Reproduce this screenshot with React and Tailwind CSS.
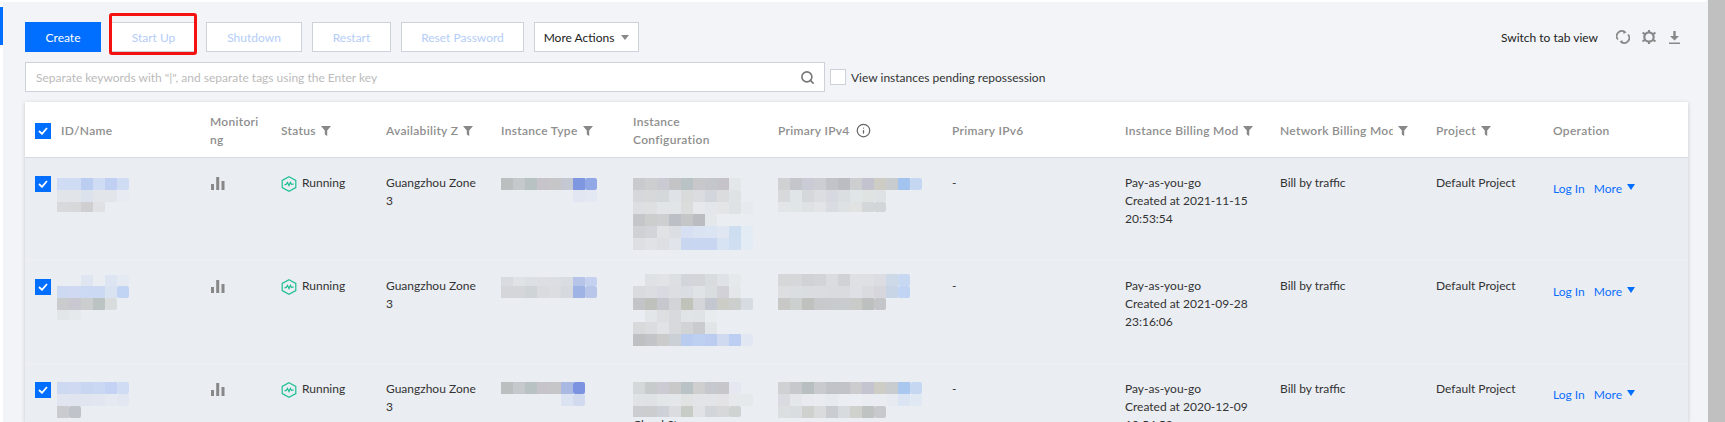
import { Search, Info } from 'lucide-react';

const columns = 'grid grid-cols-[175px_71px_105px_115px_132px_145px_174px_173px_155px_156px_117px_145px]';

const rows = [
  {
    created: '2021-11-15',
    time: '20:53:54',
    id: { y: 20, cells: [
      [0, '#cfdcf3 #d0dcf3 #bccdf2 #cfdcf4 #bfd0f3 #cfdcf4'],
      [0, '#e1e4e9 #e1e4e8 #dbe2ec #e2e5ea #e2e5ea #e8ebf1'],
      [0, '#d7d9dc #d6d8da #cfcfd2 #dfe1e5', 10],
    ] },
    type: { y: 20, cells: [
      [0, '#bcbfc0 #c6c9cc #b9c2c3 #c6c4ca #c6c5c7 #c3c8d2 #7e97e0 #92a8e6'],
      [6, '#e2e6f2 #e4e8f3'],
    ] },
    config: { y: 20, cells: [
      [0, '#c9cacd #ccced0 #cacad3 #c4c4c6 #b9c2c5 #c8c7c9 #c3c6cb #c5c3c9 #e4e7ea'],
      [0, '#d5d7da #d6d8da #d5d8db #dfe2e6 #d8dbd9 #dadcdf #d2d5db #dadcde #dfe2e4'],
      [0, '#dcdee1 #dddfe1 #e2e5e8 #e2e5e8 #dadddc #e6e9ec #e3e6ea #e3e5e7 #dfe2e4 #e7eaee'],
      [0, '#c4c6c7 #cbcecd #cdcfd0 #bcbfc6 #c5c6c8 #babcc2 #e5e8eb'],
      [0, '#cfd1d4 #d2d4d9 #e0e3e4 #dbdfe3 #d7e0f2 #dae3f2 #dbe4f3 #e0e7f3 #cedef1 #e3ebf5'],
      [0, '#dddfe2 #e0e2e5 #dddfe2 #e1e4ea #c8d6f0 #c9d6f1 #c8d6f2 #d7e2f2 #cfdef1 #e3ebf5'],
    ] },
    ip: { y: 20, cells: [
      [0, '#cfd1d2 #c4c6cc #c9ccd4 #cdced3 #c0c4c9 #bcbcc3 #ccced0 #c2c3cf #cdcdc6 #c8ccce #a3c4ef #c6d7f2'],
      [0, '#d7d9db #e0e6e8 #d4d8da #dcdde0 #d6d9df #dadee0 #e0e5e8 #dfe3e2 #dfe2e4'],
      [0, '#e3e6e9 #e0e5e7 #dfe2e2 #e2e4e8 #d9dce0 #dde1e4 #e1e3e3 #d4d7da #d3d6d8', 10],
    ] },
  },
  {
    created: '2021-09-28',
    time: '23:16:06',
    id: { y: 14, cells: [
      [2, '#e0e6f1 #eaedf2 #dde5f2 #e4e9f2', 11],
      [0, '#ccd9f1 #cfdaf2 #ccd9f2 #ccd9f2 #d9e2f1 #c2d4f4'],
      [0, '#c9cbcd #c9c7d0 #cbcdcf #bcc3c3 #d8dcdd'],
      [0, '#e3e6e9 #e6e9ec', 10],
    ] },
    type: { y: 16, cells: [
      [0, '#d8dbdf #e0e3e6 #dcdfe3 #dcdee4 #dbdee2 #d9dce0 #b5c4e8 #c5d1ee', 9],
      [0, '#d4d6da #d4d6d9 #cfd4d6 #d9dbdf #dbdde1 #d6d9de #9fb3e4 #b8c6ea'],
    ] },
    config: { y: 13, cells: [
      [1, '#dfe2e5 #e1e3e6 #dde0e3 #d2d5da #d3d5d9 #d9dcdf #dfe2e6 #e6e9ec'],
      [0, '#d9dbde #dbdde0 #d9d9e2 #dcdee2 #dadde1 #e0e3e6 #dadde0 #d2d1d8 #e4e7ea'],
      [0, '#c2c4c7 #bfc1bd #c5c8cd #d2d5d7 #bfc3ba #d3d5d8 #c3c8d0 #cdcdc8 #cbd0cf #d7dbe2'],
      [1, '#e3e6e9 #dcdee0 #d7d9dc #e1e4e7 #e0e3e6 #e9ecef'],
      [0, '#d7d9db #dadcde #e0e2e5 #d7d9dc #d1d3d4 #cacbcf #e2e5e8'],
      [0, '#bfc0c2 #c3c4c7 #cacbca #cbd0d7 #bacbf0 #bed0f2 #bcccf1 #cfdaf1 #bccef2 #e1e8f3'],
    ] },
    ip: { y: 13, cells: [
      [0, '#d6d7d9 #d5d7d9 #d0d3d6 #d2d4d7 #dadde0 #d0d2d6 #dee0e4 #dee0e4 #dcdde2 #ced9e8 #c8d8f2'],
      [0, '#dcdee0 #dbdee1 #dadde0 #dadcdf #d9dbde #d9dbdf #dde0e4 #d9dbdf #d6d6dc #c8d5e6 #c2d4f3'],
      [0, '#c8c9c7 #ccd0ce #bfc1bf #c8c9cb #c8cbcd #c8cccf #c9cbc9 #bcc0bf #c4c5c8'],
    ] },
  },
  {
    created: '2020-12-09',
    time: '10:54:53',
    note: 'Cloud Storage',
    id: { y: 18, cells: [
      [0, '#ccd9f1 #cfdaf2 #c8d6f2 #cad8f3 #c4d3f4 #d0dcf3'],
      [0, '#e0e5f0 #dfe4ef #e0e5f0 #e1e6f0 #e5e9f2 #e2e7f2'],
      [0, '#c9cbcf #c0c3c9'],
    ] },
    type: { y: 18, cells: [
      [0, '#bcbfc0 #c6c9cc #b9c2c3 #c6c4ca #c6c5c7 #a9b9e2 #7b93e0'],
      [5, '#dbe2f1 #d2daf0'],
    ] },
    config: { y: 18, cells: [
      [0, '#d5d8d9 #c7cbcc #cccbd3 #c9c9c9 #b9c3c5 #cfcfd0 #c5c8cc #c7c6cb #e5e8f1'],
      [0, '#e0e3e6 #dfe2e4 #e3e6e9 #e4e7ea #e0e3e2 #e2e4e7 #e2e4e7 #e3e3e6 #e6e9eb #e6e9eb'],
      [0, '#cbcdd0 #cbcdcf #cfd1d8 #dadcdf #c8ccc6 #e0e2e5 #d2d5d9 #d6d8da #cfd3d2', 11],
    ] },
    ip: { y: 18, cells: [
      [0, '#cfd1d2 #c6c8cc #b8c0bf #c8cacd #c0c4c8 #c1c3c8 #ccccce #c3c4cf #cdcdc6 #c8ccce #aac8ef #c6d7f2'],
      [0, '#d9dbe0 #e4e7ea #e8eaf0 #e8ebef #e6e9ed #eaedf1 #ebeef2 #e9ecf0 #e9ecf1 #e7eaf0 #dbe4f3 #e0e8f3'],
      [0, '#dcdfdf #d9dddf #cfd1cf #d9dbdd #c9ccd0 #d7dbdd #cfd1cd #bfc4c2 #c7c9cc'],
    ] },
  },
];

// pixelated redaction blocks, 12px cells
function Mosaic({ y, cells }) {
  let top = y;
  const rects = [];
  cells.forEach(([skip, colors, h = 12], r) => {
    const list = colors.split(' ');
    list.forEach((fill, c) => {
      rects.push(
        <rect
          key={`${r}-${c}`}
          x={(skip + c) * 12}
          y={top}
          width="12"
          height={h}
          rx={c === list.length - 1 ? 2 : 0}
          fill={fill}
        />
      );
    });
    top += h;
  });
  return (
    <svg width="150" height="103" className="block overflow-visible">
      {rects}
    </svg>
  );
}

function Funnel() {
  return (
    <svg width="10" height="10" viewBox="0 0 10 10" className="shrink-0">
      <path d="M0 0h10L6.2 4.6V10L3.8 8.6V4.6z" fill="#888888" />
    </svg>
  );
}

function Check() {
  return (
    <span className="flex h-4 w-4 shrink-0 items-center justify-center bg-[#006eff]">
      <svg width="10" height="8" viewBox="0 0 10 8">
        <path d="M1 4l3 2.8L9 1" fill="none" stroke="#ffffff" strokeWidth="1.8" />
      </svg>
    </span>
  );
}

function Bars() {
  return (
    <svg width="14" height="13" viewBox="0 0 14 13" className="block">
      <path d="M0 7h3v6H0zM5.2 0h3v13h-3zM10.5 4h3v9h-3z" fill="#888888" />
    </svg>
  );
}

function RunningIcon() {
  return (
    <svg width="16" height="16" viewBox="0 0 16 16" className="shrink-0">
      <path d="M8 .8l6.8 3.6v7.2L8 15.2l-6.8-3.6V4.4z" fill="none" stroke="#1fbf95" strokeWidth="1.2" />
      <path d="M3.5 8.8l1.7-.4 1.3-2 1.5 3.2 1.5-3.2 1 2 2.3-.4" fill="none" stroke="#1fbf95" strokeWidth="1.2" />
    </svg>
  );
}

function ToolButton({ children, className }) {
  return (
    <button className={`flex h-[30px] items-center justify-center border border-[#ccd1da] bg-white pt-px text-[#b4cdf8] ${className}`}>
      {children}
    </button>
  );
}

function HeadCell({ children, width, filter, className = '' }) {
  return (
    <div className={`flex items-center gap-[5px] pl-[10px] pt-[2px] font-semibold tracking-[0.3px] text-[#8e8e8e] ${className}`}>
      <span className={`overflow-hidden whitespace-nowrap ${width}`}>{children}</span>
      {filter && <Funnel />}
    </div>
  );
}

function Row({ row }) {
  return (
    <div className={`${columns} h-[103px] shrink-0 border-b border-[#eef0f4] bg-[#eaedf2] text-[#333333]`}>
      <div className="flex items-start pl-[10px]">
        <div className="mt-[18px]"><Check /></div>
        <div className="ml-[6px]"><Mosaic {...row.id} /></div>
      </div>
      <div className="pl-[11px] pt-[19px]"><Bars /></div>
      <div className="flex items-start gap-[5px] pl-[10px] pt-[18px]">
        <RunningIcon />
        <span className="-mt-[2px]">Running</span>
      </div>
      <div className="pl-[10px] pr-2 pt-4">Guangzhou Zone 3</div>
      <div className="pl-[10px]"><Mosaic {...row.type} /></div>
      <div className="relative pl-[10px]">
        <Mosaic {...row.config} />
        {row.note && <span className="absolute left-[10px] top-[52px]">{row.note}</span>}
      </div>
      <div className="pl-[10px]"><Mosaic {...row.ip} /></div>
      <div className="pl-[10px] pt-4">-</div>
      <div className="pl-[10px] pt-4">
        <div>Pay-as-you-go</div>
        <div>Created at {row.created}</div>
        <div>{row.time}</div>
      </div>
      <div className="pl-[10px] pt-4">Bill by traffic</div>
      <div className="pl-[10px] pt-4">Default Project</div>
      <div className="flex items-start pl-[10px] pt-[22px] text-[#0a6fff]">
        <span>Log In</span>
        <span className="ml-[9px]">More</span>
        <svg width="8" height="6" viewBox="0 0 8 6" className="ml-[5px] mt-[4px]">
          <path d="M0 0h8L4 6z" fill="#006eff" />
        </svg>
      </div>
    </div>
  );
}

export default function App() {
  return (
    <div className="flex h-[422px] w-[1725px] overflow-hidden bg-[#f2f4f8] font-['Lato',sans-serif] text-xs leading-[18px]">
      <div className="w-[3px] shrink-0 bg-white pt-[7px]">
        <div className="h-[38px] bg-[#006eff]" />
      </div>

      <main className="relative w-[1705px] shrink-0 pl-[22px]">
        <div className="absolute left-0 right-[2px] top-0 h-[2px] bg-white" />

        {/* Toolbar */}
        <div className="flex items-center justify-between pr-[28px] pt-[22px]">
          <div className="flex items-center gap-[10px]">
            <button className="h-[30px] w-[76px] bg-[#006eff] pt-px text-white">Create</button>
            <div className="relative">
              <ToolButton className="w-[85px]">Start Up</ToolButton>
              <div className="absolute -bottom-[3px] -left-[2px] -right-px -top-[9px] rounded-[3px] border-[3px] border-[#f5110f]" />
            </div>
            <ToolButton className="w-[96px]">Shutdown</ToolButton>
            <ToolButton className="w-[79px]">Restart</ToolButton>
            <ToolButton className="w-[123px]">Reset Password</ToolButton>
            <button className="flex h-[30px] w-[105px] items-center justify-center gap-[7px] border border-[#ccd1da] bg-white pt-px text-[#222222]">
              More Actions
              <svg width="8" height="5" viewBox="0 0 8 5"><path d="M0 0h8L4 5z" fill="#888888" /></svg>
            </button>
          </div>
          <div className="flex items-center">
            <span className="pt-px text-[#222222]">Switch to tab view</span>
            <svg width="14" height="14" viewBox="0 0 14 14" className="ml-[18px]">
              <path d="M2 9.5A5 5 0 0 1 8.5 2M12 4.5A5 5 0 0 1 5.5 12" fill="none" stroke="#888888" strokeWidth="1.7" />
              <path d="M7.5 0l3 2.3-3 1.7zM6.500 10l-3 1.700 3 2.300z" fill="#888888" />
            </svg>
            <svg width="14" height="14" viewBox="0 0 14 14" className="ml-[12px]">
              <path d="M7 2.3a4.7 4.7 0 1 0 0 9.4a4.7 4.7 0 0 0 0-9.400z" fill="none" stroke="#888888" strokeWidth="2.2" />
              <path d="M6 0h2v3H6zM6 11h2v3H6zM0 3.5l1-1.700 2.600 1.500-1 1.700zM14 3.500l-1-1.700-2.600 1.500 1 1.700zM0 10.500l1 1.700 2.600-1.500-1-1.700zM14 10.500l-1 1.700-2.600-1.500 1-1.700z" fill="#888888" />
            </svg>
            <svg width="11" height="13" viewBox="0 0 11 13" className="ml-[13px]">
              <path d="M4.3 0h2.400v5H10L5.500 9.500 1 5h3.300zM0 11.500h11V13H0z" fill="#888888" />
            </svg>
          </div>
        </div>

        {/* Search */}
        <div className="mt-[10px] flex items-center">
          <div className="flex h-[30px] w-[800px] items-center justify-between border border-[#ccd1da] bg-white pl-[10px] pr-[9px]">
            <span className="pt-[2px] text-[#bbbbbb]">Separate keywords with "|", and separate tags using the Enter key</span>
            <Search size={15} strokeWidth={2.6} className="text-[#777777]" />
          </div>
          <span className="ml-[5px] h-4 w-4 border border-[#ccd1da] bg-white" />
          <span className="ml-[5px] pt-px text-[#333333]">View instances pending repossession</span>
        </div>

        {/* Table */}
        <div className="mt-[10px] flex h-[320px] w-[1663px] flex-col bg-white shadow-[0_1px_4px_rgba(0,0,0,0.18)]">
          <div className={`${columns} h-[56px] shrink-0 border-b border-[#d5d9e0]`}>
            <div className="flex items-center gap-[10px] pl-[10px] pt-[2px] font-semibold tracking-[0.3px] text-[#8e8e8e]">
              <Check />
              ID/Name
            </div>
            <HeadCell width="w-[52px] !whitespace-normal break-all">Monitoring</HeadCell>
            <HeadCell filter>Status</HeadCell>
            <HeadCell filter width="w-[72px]">Availability Zone</HeadCell>
            <HeadCell filter>Instance Type</HeadCell>
            <HeadCell width="!whitespace-normal w-[90px]">Instance Configuration</HeadCell>
            <div className="flex items-center gap-[6px] pl-[10px] pt-[2px] font-semibold tracking-[0.3px] text-[#8e8e8e]">
              Primary IPv4
              <Info size={15} strokeWidth={2} className="text-[#666666]" />
            </div>
            <HeadCell>Primary IPv6</HeadCell>
            <HeadCell filter width="w-[113px]">Instance Billing Mode</HeadCell>
            <HeadCell filter width="w-[113px]">Network Billing Mode</HeadCell>
            <HeadCell filter>Project</HeadCell>
            <HeadCell>Operation</HeadCell>
          </div>
          {rows.map((row) => (
            <Row key={row.created} row={row} />
          ))}
        </div>
      </main>

      <div className="w-[17px] shrink-0 bg-[#c0c0c0]" />
    </div>
  );
}
